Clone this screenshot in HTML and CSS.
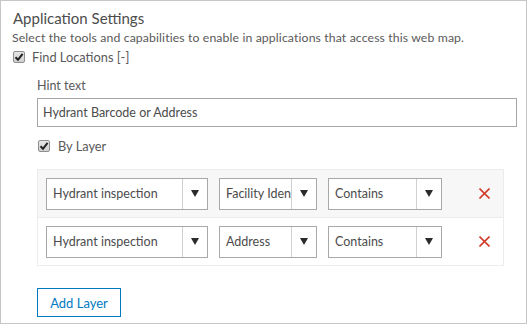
FILE: index.html
```html
<!DOCTYPE html>
<html>
<head>
<meta charset="utf-8">
<link rel="stylesheet" href="styles.css">
</head>
<body>
<div class="panel">
  <h2 class="title">Application Settings</h2>
  <p class="desc">Select the tools and capabilities to enable in applications that access this web map.</p>
  <div class="check-row">
    <span class="cb"><svg width="10" height="10" viewBox="0 0 10 10"><path d="M1.5 5.2 L4 7.8 L8.6 1.8" fill="none" stroke="#222" stroke-width="2"/></svg></span>
    <span class="check-label">Find Locations [-]</span>
  </div>
  <div class="indent">
    <div class="field-label">Hint text</div>
    <div class="text-input">Hydrant Barcode or Address</div>
    <div class="check-row sub">
      <span class="cb"><svg width="10" height="10" viewBox="0 0 10 10"><path d="M1.5 5.2 L4 7.8 L8.6 1.8" fill="none" stroke="#222" stroke-width="2"/></svg></span>
      <span class="check-label">By Layer</span>
    </div>
    <div class="layers">
      <div class="layer-row shaded">
        <div class="select s-layer"><span class="sel-text">Hydrant inspection</span><span class="sel-arrow"><svg width="8" height="7" viewBox="0 0 8 7"><path d="M0 0 H8 L4 7 Z" fill="#2b2b2b"/></svg></span></div>
        <div class="select s-field"><span class="sel-text">Facility Identifier</span><span class="sel-arrow"><svg width="8" height="7" viewBox="0 0 8 7"><path d="M0 0 H8 L4 7 Z" fill="#2b2b2b"/></svg></span></div>
        <div class="select s-op"><span class="sel-text">Contains</span><span class="sel-arrow"><svg width="8" height="7" viewBox="0 0 8 7"><path d="M0 0 H8 L4 7 Z" fill="#2b2b2b"/></svg></span></div>
        <span class="remove"><svg width="11" height="11" viewBox="0 0 11 11"><path d="M0.5 0.5 L10.5 10.5 M10.5 0.5 L0.5 10.5" stroke="#d13d2b" stroke-width="1.6"/></svg></span>
      </div>
      <div class="layer-row">
        <div class="select s-layer"><span class="sel-text">Hydrant inspection</span><span class="sel-arrow"><svg width="8" height="7" viewBox="0 0 8 7"><path d="M0 0 H8 L4 7 Z" fill="#2b2b2b"/></svg></span></div>
        <div class="select s-field"><span class="sel-text">Address</span><span class="sel-arrow"><svg width="8" height="7" viewBox="0 0 8 7"><path d="M0 0 H8 L4 7 Z" fill="#2b2b2b"/></svg></span></div>
        <div class="select s-op"><span class="sel-text">Contains</span><span class="sel-arrow"><svg width="8" height="7" viewBox="0 0 8 7"><path d="M0 0 H8 L4 7 Z" fill="#2b2b2b"/></svg></span></div>
        <span class="remove"><svg width="11" height="11" viewBox="0 0 11 11"><path d="M0.5 0.5 L10.5 10.5 M10.5 0.5 L0.5 10.5" stroke="#d13d2b" stroke-width="1.6"/></svg></span>
      </div>
    </div>
    <button class="add-btn">Add Layer</button>
  </div>
</div>
</body>
</html>
```
FILE: styles.css
```css
* { box-sizing: border-box; }
html, body { margin: 0; padding: 0; background: #fff; }
body {
  font-family: Lato, "Open Sans", "DejaVu Sans", sans-serif;
  color: #4c4c4c;
}
.panel {
  width: 527px;
  height: 324px;
  border: 1px solid #c6c6c6;
  padding: 7px 0 0 11px;
}
.title {
  margin: 0;
  font-size: 15px;
  font-weight: normal;
  line-height: 20px;
  color: #4c4c4c;
  padding-left: 1px;
}
.desc {
  margin: 2px 0 0 0;
  font-size: 12.25px;
  letter-spacing: 0.12px;
  line-height: 16px;
  color: #595959;
}
.check-row {
  display: flex;
  align-items: center;
  height: 18px;
  margin-top: 2px;
  padding-left: 1px;
}
.cb {
  width: 12px;
  height: 12px;
  border: 1px solid #8f8f8f;
  border-radius: 2px;
  background: linear-gradient(#e6e6e6, #d0d0d0);
  display: flex;
  align-items: center;
  justify-content: center;
}
.check-label {
  margin-left: 7px;
  font-size: 12.8px;
  color: #595959;
}
.indent {
  margin-left: 25px;
  margin-top: 12px;
}
.field-label {
  font-size: 12.5px;
  line-height: 16px;
  color: #595959;
}
.text-input {
  margin-top: 4px;
  width: 480px;
  height: 29px;
  border: 1px solid #a6a6a6;
  font-size: 12.5px;
  line-height: 27px;
  padding-left: 5px;
  color: #4c4c4c;
}
.check-row.sub {
  margin-top: 10px;
  padding-left: 1px;
}
.check-row.sub .check-label { margin-left: 8px; }
.layers {
  margin-top: 14px;
  width: 467px;
  border: 1px solid #ececec;
  background: #fff;
}
.layer-row {
  display: flex;
  align-items: center;
  height: 47px;
  padding-left: 8px;
}
.layer-row.shaded {
  background: #f7f7f7;
  border-bottom: 1px solid #ececec;
  height: 48px;
}
.select {
  flex: none;
  display: flex;
  height: 32px;
  border: 1px solid #a8a8a8;
  background: #fff;
  margin-right: 11px;
  font-size: 12.5px;
  color: #4c4c4c;
}
.sel-text {
  flex: 1;
  min-width: 0;
  overflow: hidden;
  white-space: nowrap;
  padding-left: 6px;
  line-height: 30px;
}
.sel-arrow {
  flex: none;
  width: 25px;
  border-left: 1px solid #d0d0d0;
  display: flex;
  align-items: center;
  justify-content: center;
}
.s-layer { width: 162px; }
.s-field { width: 98px; }
.s-op { width: 114px; }
.remove {
  margin-left: 26px;
  display: flex;
  align-items: center;
}
.add-btn {
  display: block;
  margin-top: 22px;
  width: 84px;
  height: 29px;
  border: 1px solid #0079c1;
  background: #fff;
  color: #0079c1;
  font-family: Lato, "Open Sans", sans-serif;
  font-size: 13px;
  padding: 0;
}
```
